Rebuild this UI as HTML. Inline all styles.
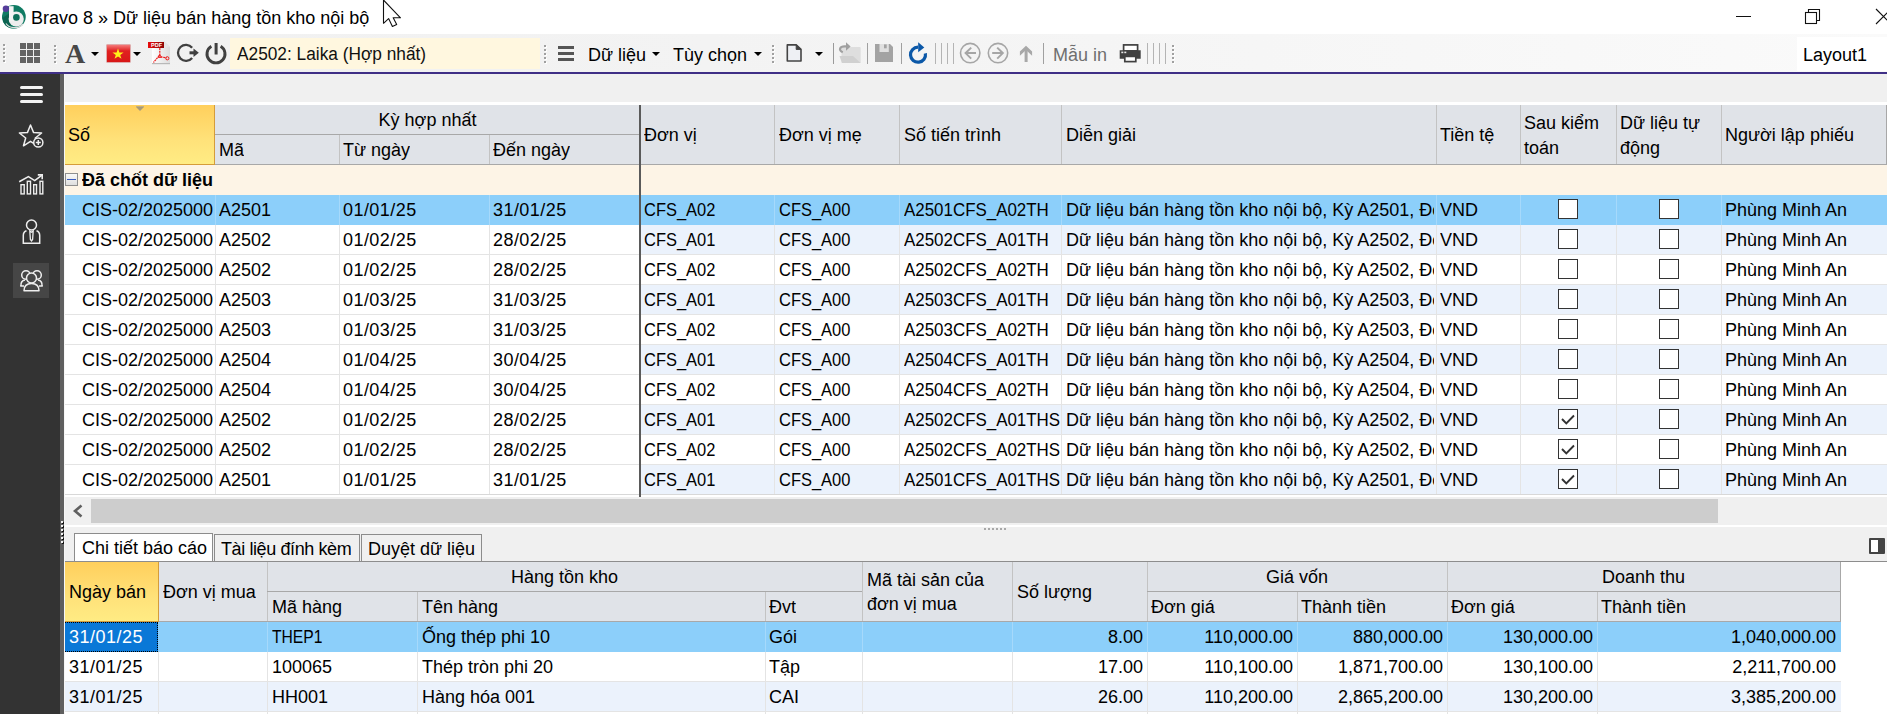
<!DOCTYPE html><html><head><meta charset="utf-8"><style>
*{box-sizing:border-box;margin:0;padding:0}
html,body{width:1887px;height:714px;overflow:hidden;background:#f0f0f0;font-family:"Liberation Sans",sans-serif;font-size:18px;color:#000}
.a{position:absolute}
.t{position:absolute;white-space:nowrap;line-height:30px;height:30px;overflow:hidden}
.cb{position:absolute;width:20px;height:20px;border:1px solid #333;background:#fff}
</style></head><body>
<div class="a" style="left:0px;top:0px;width:1887px;height:34px;background:#fff;"></div>
<div class="t" style="left:31px;top:3px;line-height:30px;height:30px;">Bravo 8 » Dữ liệu bán hàng tồn kho nội bộ</div>
<div class="a" style="left:0px;top:34px;width:1887px;height:38px;background:linear-gradient(90deg,#f0f0f0 0%,#f4f4f4 50%,#fafafa 100%);"></div>
<div class="a" style="left:0px;top:72px;width:1887px;height:2px;background:#3f2f86;"></div>
<div class="a" style="left:3px;top:44px;width:2px;height:2px;background:#a0a0a0;box-shadow:1px 1px 0 #fff"></div>
<div class="a" style="left:3px;top:48px;width:2px;height:2px;background:#a0a0a0;box-shadow:1px 1px 0 #fff"></div>
<div class="a" style="left:3px;top:52px;width:2px;height:2px;background:#a0a0a0;box-shadow:1px 1px 0 #fff"></div>
<div class="a" style="left:3px;top:56px;width:2px;height:2px;background:#a0a0a0;box-shadow:1px 1px 0 #fff"></div>
<div class="a" style="left:3px;top:60px;width:2px;height:2px;background:#a0a0a0;box-shadow:1px 1px 0 #fff"></div>
<div class="a" style="left:20.0px;top:43.0px;width:6px;height:6px;background:#636363;"></div>
<div class="a" style="left:27.2px;top:43.0px;width:6px;height:6px;background:#636363;"></div>
<div class="a" style="left:34.4px;top:43.0px;width:6px;height:6px;background:#636363;"></div>
<div class="a" style="left:20.0px;top:50.2px;width:6px;height:6px;background:#636363;"></div>
<div class="a" style="left:27.2px;top:50.2px;width:6px;height:6px;background:#636363;"></div>
<div class="a" style="left:34.4px;top:50.2px;width:6px;height:6px;background:#636363;"></div>
<div class="a" style="left:20.0px;top:57.4px;width:6px;height:6px;background:#636363;"></div>
<div class="a" style="left:27.2px;top:57.4px;width:6px;height:6px;background:#636363;"></div>
<div class="a" style="left:34.4px;top:57.4px;width:6px;height:6px;background:#636363;"></div>
<div class="a" style="left:54px;top:45px;width:2px;height:2px;background:#a0a0a0;box-shadow:1px 1px 0 #fff"></div>
<div class="a" style="left:54px;top:49px;width:2px;height:2px;background:#a0a0a0;box-shadow:1px 1px 0 #fff"></div>
<div class="a" style="left:54px;top:53px;width:2px;height:2px;background:#a0a0a0;box-shadow:1px 1px 0 #fff"></div>
<div class="a" style="left:54px;top:57px;width:2px;height:2px;background:#a0a0a0;box-shadow:1px 1px 0 #fff"></div>
<div class="a" style="left:54px;top:61px;width:2px;height:2px;background:#a0a0a0;box-shadow:1px 1px 0 #fff"></div>
<div class="a" style="left:65px;top:37px;font-family:'Liberation Serif',serif;font-weight:bold;font-size:28px;line-height:34px;color:#474747">A</div>
<div class="a" style="left:91px;top:52px;width:0;height:0;border-left:4.0px solid transparent;border-right:4.0px solid transparent;border-top:4px solid #000"></div>
<div class="a" style="left:107px;top:45px;width:23px;height:17px;background:linear-gradient(180deg,#f47a7a 0%,#e12020 35%,#d81818 100%);box-shadow:0 0 0 0.5px #c66"></div>
<svg class="a" style="left:111px;top:47px" width="14" height="13" viewBox="0 0 14 13"><polygon points="7,1.5 8.4,5.4 12.6,5.4 9.2,7.9 10.5,11.8 7,9.4 3.5,11.8 4.8,7.9 1.4,5.4 5.6,5.4" fill="#ffef1a"/></svg>
<div class="a" style="left:133px;top:52px;width:0;height:0;border-left:4.0px solid transparent;border-right:4.0px solid transparent;border-top:4px solid #000"></div>
<svg class="a" style="left:147px;top:40px" width="25" height="25" viewBox="0 0 25 25"><defs><linearGradient id="pg" x1="0" y1="0" x2="1" y2="0"><stop offset="0" stop-color="#ffffff"/><stop offset="1" stop-color="#dcdcdc"/></linearGradient><linearGradient id="bn" x1="0" y1="0" x2="1" y2="0"><stop offset="0" stop-color="#e80c0c"/><stop offset="1" stop-color="#8e0606"/></linearGradient></defs><path d="M5 1 H17 L23 7 V24 H5 Z" fill="url(#pg)"/><rect x="5" y="23" width="18" height="1.2" fill="#b8b8b8"/><path d="M17 1 L23 7 H17 Z" fill="#e6e6e6"/><rect x="1" y="2" width="16" height="6" fill="url(#bn)"/><text x="4" y="7" font-family="Liberation Sans" font-weight="bold" font-size="5.5" fill="#fff">PDF</text><path d="M12.8 8 V15.5 M12.3 15.5 L6.5 22.5 M13.5 16.8 L19.5 17.8" fill="none" stroke="#ee1c1c" stroke-width="1.2" stroke-dasharray="2 0.7"/><path d="M11.3 17.5 L12.8 14.8 L14.5 17.3 Z" fill="none" stroke="#ee1c1c" stroke-width="1"/><circle cx="20.3" cy="18.3" r="1.6" fill="none" stroke="#ee1c1c" stroke-width="1"/></svg>
<svg class="a" style="left:176px;top:42px" width="24" height="22" viewBox="0 0 24 22"><path d="M16.13 5.66 A8 8 0 1 0 16.13 15.94" fill="none" stroke="#404040" stroke-width="2.3"/><rect x="13.5" y="9.3" width="5.5" height="3" fill="#404040"/><path d="M17.5 6.6 L22.8 10.8 L17.5 15 Z" fill="#404040"/></svg>
<svg class="a" style="left:204px;top:40px" width="24" height="25" viewBox="0 0 24 25"><path d="M7.35 6.2 A9 9 0 1 0 16.65 6.2" fill="none" stroke="#404040" stroke-width="2.9"/><rect x="10.6" y="3" width="3" height="11.5" fill="#404040"/></svg>
<div class="a" style="left:230px;top:38px;width:310px;height:31px;background:#fff7df;"></div>
<div class="t" style="left:237px;top:39px;line-height:30px;height:30px;color:#111;transform:scaleX(0.96);transform-origin:0 0">A2502: Laika (Hợp nhất)</div>
<div class="a" style="left:544px;top:45px;width:2px;height:2px;background:#a0a0a0;box-shadow:1px 1px 0 #fff"></div>
<div class="a" style="left:544px;top:49px;width:2px;height:2px;background:#a0a0a0;box-shadow:1px 1px 0 #fff"></div>
<div class="a" style="left:544px;top:53px;width:2px;height:2px;background:#a0a0a0;box-shadow:1px 1px 0 #fff"></div>
<div class="a" style="left:544px;top:57px;width:2px;height:2px;background:#a0a0a0;box-shadow:1px 1px 0 #fff"></div>
<div class="a" style="left:544px;top:61px;width:2px;height:2px;background:#a0a0a0;box-shadow:1px 1px 0 #fff"></div>
<div class="a" style="left:558px;top:46px;width:16px;height:3px;background:#555;"></div>
<div class="a" style="left:558px;top:52px;width:16px;height:3px;background:#555;"></div>
<div class="a" style="left:558px;top:58px;width:16px;height:3px;background:#555;"></div>
<div class="t" style="left:588px;top:40px;line-height:30px;height:30px;">Dữ liệu</div>
<div class="a" style="left:652px;top:52px;width:0;height:0;border-left:4.0px solid transparent;border-right:4.0px solid transparent;border-top:4.5px solid #000"></div>
<div class="t" style="left:673px;top:40px;line-height:30px;height:30px;">Tùy chọn</div>
<div class="a" style="left:754px;top:52px;width:0;height:0;border-left:4.0px solid transparent;border-right:4.0px solid transparent;border-top:4.5px solid #000"></div>
<div class="a" style="left:772px;top:45px;width:2px;height:2px;background:#a0a0a0;box-shadow:1px 1px 0 #fff"></div>
<div class="a" style="left:772px;top:49px;width:2px;height:2px;background:#a0a0a0;box-shadow:1px 1px 0 #fff"></div>
<div class="a" style="left:772px;top:53px;width:2px;height:2px;background:#a0a0a0;box-shadow:1px 1px 0 #fff"></div>
<div class="a" style="left:772px;top:57px;width:2px;height:2px;background:#a0a0a0;box-shadow:1px 1px 0 #fff"></div>
<div class="a" style="left:772px;top:61px;width:2px;height:2px;background:#a0a0a0;box-shadow:1px 1px 0 #fff"></div>
<svg class="a" style="left:785px;top:43px" width="18" height="20" viewBox="0 0 18 20"><path d="M2.3 1.9 H11.2 L16 6.4 V18 H2.3 Z" fill="#eef0f4" stroke="#444" stroke-width="1.6" stroke-linejoin="round"/><path d="M11.2 1.9 L16 6.4 H11.2 Z" fill="#444" stroke="#444" stroke-width="1"/></svg>
<div class="a" style="left:815px;top:52px;width:0;height:0;border-left:4.0px solid transparent;border-right:4.0px solid transparent;border-top:4px solid #000"></div>
<div class="a" style="left:833px;top:43px;width:1px;height:21px;background:#9a9a9a;"></div>
<svg class="a" style="left:838px;top:41px" width="24" height="24" viewBox="0 0 24 24"><rect x="3.5" y="6" width="19.2" height="16" rx="1" fill="#dedede"/><path d="M1.5 15 H15 L22.7 22 H4 Z" fill="#d0d0d0"/><path d="M4.8 11.3 C0.3 9.5 1.2 4.6 8.3 5.4" fill="none" stroke="#a0a0a0" stroke-width="2.3"/><path d="M8 1.3 L12.6 5.5 L8 9.7 Z" fill="#a0a0a0"/></svg>
<div class="a" style="left:867px;top:43px;width:1px;height:21px;background:#a0a0a0;"></div>
<svg class="a" style="left:874px;top:43px" width="20" height="20" viewBox="0 0 20 20"><path d="M1 1 H16 L19 4 V19 H1 Z" fill="#a3a3a3"/><rect x="5.5" y="1" width="9.3" height="8" fill="#e0e0e0"/><rect x="10" y="1.4" width="2.7" height="3.9" fill="#a3a3a3"/></svg>
<div class="a" style="left:901px;top:43px;width:1px;height:21px;background:#a0a0a0;"></div>
<svg class="a" style="left:907px;top:41px" width="22" height="24" viewBox="0 0 22 24"><path d="M18.39 12.4 A7.5 7.5 0 1 1 11 6.2" fill="none" stroke="#0b58a8" stroke-width="3.2"/><path d="M11.2 1.2 L17.3 6.5 L11.2 11.3 Z" fill="#0b58a8"/></svg>
<div class="a" style="left:935px;top:43px;width:1px;height:21px;background:#b4b4b4;"></div>
<div class="a" style="left:941px;top:43px;width:1px;height:21px;background:#b4b4b4;"></div>
<div class="a" style="left:947px;top:43px;width:1px;height:21px;background:#b4b4b4;"></div>
<div class="a" style="left:953px;top:43px;width:1px;height:21px;background:#b4b4b4;"></div>
<svg class="a" style="left:959px;top:42px" width="23" height="23" viewBox="0 0 23 23"><circle cx="11.2" cy="11.1" r="9.7" fill="none" stroke="#a6a6a6" stroke-width="1.6"/><path d="M17 11.1 H6.8 M12.2 5.6 L6.6 11.1 L12.2 16.6" fill="none" stroke="#a6a6a6" stroke-width="2"/></svg>
<svg class="a" style="left:987px;top:42px" width="23" height="23" viewBox="0 0 23 23"><circle cx="11" cy="11.1" r="9.7" fill="none" stroke="#a6a6a6" stroke-width="1.6"/><path d="M5.2 11.1 H15.4 M10.2 5.6 L15.8 11.1 L10.2 16.6" fill="none" stroke="#a6a6a6" stroke-width="2"/></svg>
<svg class="a" style="left:1018px;top:45px" width="16" height="18" viewBox="0 0 16 18"><rect x="6.6" y="3" width="3" height="14" fill="#a8a8a8"/><path d="M8 0.7 L14.1 6.5 V10.8 L8 5 L1.9 10.8 V6.5 Z" fill="#a8a8a8"/></svg>
<div class="a" style="left:1043px;top:43px;width:1px;height:21px;background:#a0a0a0;"></div>
<div class="t" style="left:1053px;top:40px;line-height:30px;height:30px;color:#6f6f6f">Mẫu in</div>
<svg class="a" style="left:1118px;top:43px" width="24" height="20" viewBox="0 0 24 20"><rect x="5.6" y="1.9" width="14" height="6" fill="#fff" stroke="#404040" stroke-width="1.7"/><path d="M1.7 7.2 H22.7 V15.8 H17.8 V13.3 H6 V15.8 H1.7 Z" fill="#404040"/><rect x="6.8" y="13.4" width="11" height="5.2" fill="#fff" stroke="#404040" stroke-width="1.7"/><rect x="3.3" y="8.6" width="2" height="1.6" fill="#e8e8e8"/><rect x="6.3" y="8.6" width="2" height="1.6" fill="#e8e8e8"/></svg>
<div class="a" style="left:1147px;top:43px;width:1px;height:21px;background:#b4b4b4;"></div>
<div class="a" style="left:1153px;top:43px;width:1px;height:21px;background:#b4b4b4;"></div>
<div class="a" style="left:1159px;top:43px;width:1px;height:21px;background:#b4b4b4;"></div>
<div class="a" style="left:1165px;top:43px;width:1px;height:21px;background:#b4b4b4;"></div>
<div class="a" style="left:1172px;top:45px;width:2px;height:2px;background:#a0a0a0;box-shadow:1px 1px 0 #fff"></div>
<div class="a" style="left:1172px;top:49px;width:2px;height:2px;background:#a0a0a0;box-shadow:1px 1px 0 #fff"></div>
<div class="a" style="left:1172px;top:53px;width:2px;height:2px;background:#a0a0a0;box-shadow:1px 1px 0 #fff"></div>
<div class="a" style="left:1172px;top:57px;width:2px;height:2px;background:#a0a0a0;box-shadow:1px 1px 0 #fff"></div>
<div class="a" style="left:1172px;top:61px;width:2px;height:2px;background:#a0a0a0;box-shadow:1px 1px 0 #fff"></div>
<div class="a" style="left:1797px;top:37px;width:90px;height:34px;background:#ffffff;"></div>
<div class="t" style="left:1803px;top:40px;line-height:30px;height:30px;">Layout1</div>
<div class="a" style="left:1736px;top:16px;width:15px;height:1px;background:#111;"></div>
<svg class="a" style="left:1804px;top:8px" width="18" height="18" viewBox="0 0 18 18"><path d="M4.5 4.5 V1.5 H15.5 V12.5 H12.5" fill="none" stroke="#111" stroke-width="1.1"/><rect x="1.5" y="4.5" width="11" height="11" fill="none" stroke="#111" stroke-width="1.1"/></svg>
<svg class="a" style="left:1875px;top:8px" width="14" height="17" viewBox="0 0 14 17"><path d="M1 1 L16 16 M16 1 L1 16" stroke="#111" stroke-width="1.1"/></svg>
<svg class="a" style="left:382px;top:-1px" width="22" height="30" viewBox="0 0 22 30"><path d="M1.5 1 V24.3 L6.6 19.6 L10.4 27.4 L14.7 25.5 L11.2 18.8 L18.5 18.8 Z" fill="#fff" stroke="#111" stroke-width="1.1" stroke-linejoin="round"/></svg>
<svg class="a" style="left:2px;top:4px" width="26" height="26" viewBox="0 0 26 26"><circle cx="11.85" cy="12.8" r="11.9" fill="#0f7b63"/><path d="M0.5 14 A11.9 11.9 0 0 0 9 24.3 L9 8 Z" fill="#0b6350"/><circle cx="14.2" cy="15" r="7.6" fill="#eeeeee"/><rect x="7" y="2.2" width="4.6" height="15" fill="#f4f4f4"/><circle cx="14.4" cy="13.4" r="3.3" fill="#0d6f59"/><path d="M4 19.5 C7 24.5 16 25.5 21 20" fill="none" stroke="#dcdcdc" stroke-width="1.2"/><circle cx="3.9" cy="4.7" r="3.2" fill="#553c9a"/></svg>
<div class="a" style="left:0px;top:74px;width:60px;height:640px;background:#333333;"></div>
<div class="a" style="left:60px;top:74px;width:4px;height:640px;background:#5f5f5f;"></div>
<div class="a" style="left:20px;top:86.0px;width:23px;height:3px;background:#f4f4f4;border-radius:1.5px"></div>
<div class="a" style="left:20px;top:92.9px;width:23px;height:3px;background:#f4f4f4;border-radius:1.5px"></div>
<div class="a" style="left:20px;top:99.8px;width:23px;height:3px;background:#f4f4f4;border-radius:1.5px"></div>
<svg class="a" style="left:18px;top:123px" width="28" height="27" viewBox="0 0 28 27"><path d="M12.5 2 L15.6 9.6 L23.6 10 L17.3 15 L19.5 22.8 L12.5 18.3 L5.5 22.8 L7.7 15 L1.4 10 L9.4 9.6 Z" fill="none" stroke="#eeeeee" stroke-width="1.5" stroke-linejoin="round"/><circle cx="20.3" cy="19.5" r="4.6" fill="#333" stroke="#eeeeee" stroke-width="1.5"/><path d="M20.3 17 V22 M17.8 19.5 H22.8" stroke="#eeeeee" stroke-width="1.5"/></svg>
<svg class="a" style="left:18px;top:172px" width="27" height="23" viewBox="0 0 27 23"><path d="M1.2 9.8 L10.4 4.6 L16.7 8.6 L24 3.1" fill="none" stroke="#eeeeee" stroke-width="1.6"/><path d="M19.8 2.9 H24.2 V7.2" fill="none" stroke="#eeeeee" stroke-width="1.6"/><rect x="3" y="12.7" width="3.2" height="9.2" fill="none" stroke="#eeeeee" stroke-width="1.4"/><rect x="9.3" y="9.3" width="3.2" height="12.6" fill="none" stroke="#eeeeee" stroke-width="1.4"/><rect x="15.7" y="12.7" width="2.8" height="9.2" fill="none" stroke="#eeeeee" stroke-width="1.4"/><rect x="22" y="9.3" width="2.8" height="12.6" fill="none" stroke="#eeeeee" stroke-width="1.4"/></svg>
<svg class="a" style="left:21px;top:219px" width="21" height="26" viewBox="0 0 21 26"><circle cx="10.5" cy="6" r="5" fill="none" stroke="#eeeeee" stroke-width="1.5"/><path d="M5.5 11.8 C3.2 12.6 2.3 14 2.3 16.5 V24.3 H18.7 V16.5 C18.7 14 17.8 12.6 15.5 11.8" fill="none" stroke="#eeeeee" stroke-width="1.5"/><path d="M8.8 12 L10.5 13.3 L12.2 12 L11.6 20.5 L10.5 22 L9.4 20.5 Z" fill="none" stroke="#eeeeee" stroke-width="1.3"/></svg>
<div class="a" style="left:13px;top:263px;width:36px;height:35px;background:#464646;"></div>
<svg class="a" style="left:18px;top:268px" width="27" height="25" viewBox="0 0 27 25"><circle cx="8" cy="7" r="4.3" fill="none" stroke="#eeeeee" stroke-width="1.5"/><circle cx="19" cy="7" r="4.3" fill="none" stroke="#eeeeee" stroke-width="1.5"/><path d="M3 18 C2.5 14 4.5 12.5 7 12 M24 18 C24.5 14 22.5 12.5 20 12" fill="none" stroke="#eeeeee" stroke-width="1.5"/><path d="M2.2 18 H6" stroke="#eeeeee" stroke-width="1.5"/><path d="M21 18 H24.8" stroke="#eeeeee" stroke-width="1.5"/><circle cx="13.5" cy="10" r="5" fill="#464646" stroke="#eeeeee" stroke-width="1.5"/><path d="M6 22.8 C6 17 9 15.5 13.5 15.5 C18 15.5 21 17 21 22.8 Z" fill="#464646" stroke="#eeeeee" stroke-width="1.5" stroke-linejoin="round"/></svg>
<div class="a" style="left:64px;top:102px;width:1823px;height:3px;background:#ffffff;"></div>
<div class="a" style="left:64px;top:105px;width:1823px;height:60px;background:#e0e3e8;"></div>
<div class="a" style="left:64px;top:105px;width:151px;height:60px;background:linear-gradient(180deg,#ffcf5c 0%,#ffe27a 60%,#ffec84 100%);border-right:1px solid #d59c3a;border-bottom:1px solid #d59c3a"></div>
<div class="t" style="left:68px;top:120px;line-height:30px;height:30px;">Số</div>
<div class="a" style="left:136px;top:107px;width:0;height:0;border-left:4px solid transparent;border-right:4px solid transparent;border-top:4px solid #a89a78"></div>
<div class="a" style="left:136px;top:106px;width:8px;height:1px;background:#c0ae80;"></div>
<div class="a" style="left:215px;top:134px;width:425px;height:1px;background:#a8a8a8;"></div>
<div class="t" style="left:215px;top:105px;line-height:30px;height:30px;width:425px;text-align:center;">Kỳ hợp nhất</div>
<div class="t" style="left:219px;top:135px;line-height:30px;height:30px;">Mã</div>
<div class="a" style="left:339px;top:135px;width:1px;height:30px;background:#c3c3c3;"></div>
<div class="t" style="left:343px;top:135px;line-height:30px;height:30px;">Từ ngày</div>
<div class="a" style="left:489px;top:135px;width:1px;height:30px;background:#c3c3c3;"></div>
<div class="t" style="left:493px;top:135px;line-height:30px;height:30px;">Đến ngày</div>
<div class="a" style="left:640px;top:105px;width:1px;height:60px;background:#c3c3c3;"></div>
<div class="t" style="left:644px;top:120px;line-height:30px;height:30px;">Đơn vị</div>
<div class="a" style="left:774px;top:105px;width:1px;height:60px;background:#c3c3c3;"></div>
<div class="t" style="left:779px;top:120px;line-height:30px;height:30px;">Đơn vị mẹ</div>
<div class="a" style="left:899px;top:105px;width:1px;height:60px;background:#c3c3c3;"></div>
<div class="t" style="left:904px;top:120px;line-height:30px;height:30px;">Số tiến trình</div>
<div class="a" style="left:1061px;top:105px;width:1px;height:60px;background:#c3c3c3;"></div>
<div class="t" style="left:1066px;top:120px;line-height:30px;height:30px;">Diễn giải</div>
<div class="a" style="left:1436px;top:105px;width:1px;height:60px;background:#c3c3c3;"></div>
<div class="t" style="left:1440px;top:120px;line-height:30px;height:30px;">Tiền tệ</div>
<div class="a" style="left:1520px;top:105px;width:1px;height:60px;background:#c3c3c3;"></div>
<div class="a" style="left:1524px;top:111px;line-height:24.5px;white-space:nowrap">Sau kiểm<br>toán</div>
<div class="a" style="left:1616px;top:105px;width:1px;height:60px;background:#c3c3c3;"></div>
<div class="a" style="left:1620px;top:111px;line-height:24.5px;white-space:nowrap">Dữ liệu tự<br>động</div>
<div class="a" style="left:1721px;top:105px;width:1px;height:60px;background:#c3c3c3;"></div>
<div class="t" style="left:1725px;top:120px;line-height:30px;height:30px;">Người lập phiếu</div>
<div class="a" style="left:64px;top:164px;width:1823px;height:1px;background:#a8a8a8;"></div>
<div class="a" style="left:64px;top:164px;width:151px;height:1px;background:#d59c3a;"></div>
<div class="a" style="left:1886px;top:105px;width:1px;height:60px;background:#a8a8a8;"></div>
<div class="a" style="left:64px;top:165px;width:1823px;height:30px;background:#fdf4e6;"></div>
<div class="a" style="left:65px;top:173px;width:13px;height:13px;background:linear-gradient(180deg,#fafafa,#dedede);border:1px solid #8f8f8f"></div>
<div class="a" style="left:67px;top:179px;width:9px;height:1px;background:#3a5cc0;"></div>
<div class="t" style="left:82px;top:165px;line-height:30px;height:30px;"><b>Đã chốt dữ liệu</b></div>
<div class="a" style="left:64px;top:195px;width:1823px;height:30px;background:#8ccffa;"></div>
<div class="a" style="left:64px;top:224px;width:1823px;height:1px;background:#8ccffa;"></div>
<div class="t" style="left:82px;top:195px;width:133.0px;">CIS-02/2025000</div>
<div class="t" style="left:219px;top:195px;width:120.0px;">A2501</div>
<div class="t" style="left:343px;top:195px;width:146.0px;letter-spacing:0.45px">01/01/25</div>
<div class="t" style="left:493px;top:195px;width:146.0px;letter-spacing:0.45px">31/01/25</div>
<div class="t" style="left:644px;top:195px;width:142.1px;transform:scaleX(0.915);transform-origin:0 0;">CFS_A02</div>
<div class="t" style="left:779px;top:195px;width:131.1px;transform:scaleX(0.915);transform-origin:0 0;">CFS_A00</div>
<div class="t" style="left:904px;top:195px;width:167.0px;transform:scaleX(0.94);transform-origin:0 0;">A2501CFS_A02TH</div>
<div class="t" style="left:1066px;top:195px;width:368.0px;">Dữ liệu bán hàng tồn kho nội bộ, Kỳ A2501, Đơn vị</div>
<div class="t" style="left:1440px;top:195px;width:80.0px;">VND</div>
<div class="t" style="left:1725px;top:195px;width:162.0px;">Phùng Minh An</div>
<div class="cb" style="left:1558px;top:199px"></div>
<div class="cb" style="left:1659px;top:199px"></div>
<div class="a" style="left:64px;top:225px;width:576px;height:30px;background:#ffffff;"></div>
<div class="a" style="left:641px;top:225px;width:1246px;height:30px;background:#ebf2fc;"></div>
<div class="a" style="left:64px;top:254px;width:1823px;height:1px;background:#e4e4e4;"></div>
<div class="t" style="left:82px;top:225px;width:133.0px;">CIS-02/2025000</div>
<div class="t" style="left:219px;top:225px;width:120.0px;">A2502</div>
<div class="t" style="left:343px;top:225px;width:146.0px;letter-spacing:0.45px">01/02/25</div>
<div class="t" style="left:493px;top:225px;width:146.0px;letter-spacing:0.45px">28/02/25</div>
<div class="t" style="left:644px;top:225px;width:142.1px;transform:scaleX(0.915);transform-origin:0 0;">CFS_A01</div>
<div class="t" style="left:779px;top:225px;width:131.1px;transform:scaleX(0.915);transform-origin:0 0;">CFS_A00</div>
<div class="t" style="left:904px;top:225px;width:167.0px;transform:scaleX(0.94);transform-origin:0 0;">A2502CFS_A01TH</div>
<div class="t" style="left:1066px;top:225px;width:368.0px;">Dữ liệu bán hàng tồn kho nội bộ, Kỳ A2502, Đơn vị</div>
<div class="t" style="left:1440px;top:225px;width:80.0px;">VND</div>
<div class="t" style="left:1725px;top:225px;width:162.0px;">Phùng Minh An</div>
<div class="cb" style="left:1558px;top:229px"></div>
<div class="cb" style="left:1659px;top:229px"></div>
<div class="a" style="left:64px;top:255px;width:576px;height:30px;background:#ffffff;"></div>
<div class="a" style="left:641px;top:255px;width:1246px;height:30px;background:#ffffff;"></div>
<div class="a" style="left:64px;top:284px;width:1823px;height:1px;background:#e4e4e4;"></div>
<div class="t" style="left:82px;top:255px;width:133.0px;">CIS-02/2025000</div>
<div class="t" style="left:219px;top:255px;width:120.0px;">A2502</div>
<div class="t" style="left:343px;top:255px;width:146.0px;letter-spacing:0.45px">01/02/25</div>
<div class="t" style="left:493px;top:255px;width:146.0px;letter-spacing:0.45px">28/02/25</div>
<div class="t" style="left:644px;top:255px;width:142.1px;transform:scaleX(0.915);transform-origin:0 0;">CFS_A02</div>
<div class="t" style="left:779px;top:255px;width:131.1px;transform:scaleX(0.915);transform-origin:0 0;">CFS_A00</div>
<div class="t" style="left:904px;top:255px;width:167.0px;transform:scaleX(0.94);transform-origin:0 0;">A2502CFS_A02TH</div>
<div class="t" style="left:1066px;top:255px;width:368.0px;">Dữ liệu bán hàng tồn kho nội bộ, Kỳ A2502, Đơn vị</div>
<div class="t" style="left:1440px;top:255px;width:80.0px;">VND</div>
<div class="t" style="left:1725px;top:255px;width:162.0px;">Phùng Minh An</div>
<div class="cb" style="left:1558px;top:259px"></div>
<div class="cb" style="left:1659px;top:259px"></div>
<div class="a" style="left:64px;top:285px;width:576px;height:30px;background:#ffffff;"></div>
<div class="a" style="left:641px;top:285px;width:1246px;height:30px;background:#ebf2fc;"></div>
<div class="a" style="left:64px;top:314px;width:1823px;height:1px;background:#e4e4e4;"></div>
<div class="t" style="left:82px;top:285px;width:133.0px;">CIS-02/2025000</div>
<div class="t" style="left:219px;top:285px;width:120.0px;">A2503</div>
<div class="t" style="left:343px;top:285px;width:146.0px;letter-spacing:0.45px">01/03/25</div>
<div class="t" style="left:493px;top:285px;width:146.0px;letter-spacing:0.45px">31/03/25</div>
<div class="t" style="left:644px;top:285px;width:142.1px;transform:scaleX(0.915);transform-origin:0 0;">CFS_A01</div>
<div class="t" style="left:779px;top:285px;width:131.1px;transform:scaleX(0.915);transform-origin:0 0;">CFS_A00</div>
<div class="t" style="left:904px;top:285px;width:167.0px;transform:scaleX(0.94);transform-origin:0 0;">A2503CFS_A01TH</div>
<div class="t" style="left:1066px;top:285px;width:368.0px;">Dữ liệu bán hàng tồn kho nội bộ, Kỳ A2503, Đơn vị</div>
<div class="t" style="left:1440px;top:285px;width:80.0px;">VND</div>
<div class="t" style="left:1725px;top:285px;width:162.0px;">Phùng Minh An</div>
<div class="cb" style="left:1558px;top:289px"></div>
<div class="cb" style="left:1659px;top:289px"></div>
<div class="a" style="left:64px;top:315px;width:576px;height:30px;background:#ffffff;"></div>
<div class="a" style="left:641px;top:315px;width:1246px;height:30px;background:#ffffff;"></div>
<div class="a" style="left:64px;top:344px;width:1823px;height:1px;background:#e4e4e4;"></div>
<div class="t" style="left:82px;top:315px;width:133.0px;">CIS-02/2025000</div>
<div class="t" style="left:219px;top:315px;width:120.0px;">A2503</div>
<div class="t" style="left:343px;top:315px;width:146.0px;letter-spacing:0.45px">01/03/25</div>
<div class="t" style="left:493px;top:315px;width:146.0px;letter-spacing:0.45px">31/03/25</div>
<div class="t" style="left:644px;top:315px;width:142.1px;transform:scaleX(0.915);transform-origin:0 0;">CFS_A02</div>
<div class="t" style="left:779px;top:315px;width:131.1px;transform:scaleX(0.915);transform-origin:0 0;">CFS_A00</div>
<div class="t" style="left:904px;top:315px;width:167.0px;transform:scaleX(0.94);transform-origin:0 0;">A2503CFS_A02TH</div>
<div class="t" style="left:1066px;top:315px;width:368.0px;">Dữ liệu bán hàng tồn kho nội bộ, Kỳ A2503, Đơn vị</div>
<div class="t" style="left:1440px;top:315px;width:80.0px;">VND</div>
<div class="t" style="left:1725px;top:315px;width:162.0px;">Phùng Minh An</div>
<div class="cb" style="left:1558px;top:319px"></div>
<div class="cb" style="left:1659px;top:319px"></div>
<div class="a" style="left:64px;top:345px;width:576px;height:30px;background:#ffffff;"></div>
<div class="a" style="left:641px;top:345px;width:1246px;height:30px;background:#ebf2fc;"></div>
<div class="a" style="left:64px;top:374px;width:1823px;height:1px;background:#e4e4e4;"></div>
<div class="t" style="left:82px;top:345px;width:133.0px;">CIS-02/2025000</div>
<div class="t" style="left:219px;top:345px;width:120.0px;">A2504</div>
<div class="t" style="left:343px;top:345px;width:146.0px;letter-spacing:0.45px">01/04/25</div>
<div class="t" style="left:493px;top:345px;width:146.0px;letter-spacing:0.45px">30/04/25</div>
<div class="t" style="left:644px;top:345px;width:142.1px;transform:scaleX(0.915);transform-origin:0 0;">CFS_A01</div>
<div class="t" style="left:779px;top:345px;width:131.1px;transform:scaleX(0.915);transform-origin:0 0;">CFS_A00</div>
<div class="t" style="left:904px;top:345px;width:167.0px;transform:scaleX(0.94);transform-origin:0 0;">A2504CFS_A01TH</div>
<div class="t" style="left:1066px;top:345px;width:368.0px;">Dữ liệu bán hàng tồn kho nội bộ, Kỳ A2504, Đơn vị</div>
<div class="t" style="left:1440px;top:345px;width:80.0px;">VND</div>
<div class="t" style="left:1725px;top:345px;width:162.0px;">Phùng Minh An</div>
<div class="cb" style="left:1558px;top:349px"></div>
<div class="cb" style="left:1659px;top:349px"></div>
<div class="a" style="left:64px;top:375px;width:576px;height:30px;background:#ffffff;"></div>
<div class="a" style="left:641px;top:375px;width:1246px;height:30px;background:#ffffff;"></div>
<div class="a" style="left:64px;top:404px;width:1823px;height:1px;background:#e4e4e4;"></div>
<div class="t" style="left:82px;top:375px;width:133.0px;">CIS-02/2025000</div>
<div class="t" style="left:219px;top:375px;width:120.0px;">A2504</div>
<div class="t" style="left:343px;top:375px;width:146.0px;letter-spacing:0.45px">01/04/25</div>
<div class="t" style="left:493px;top:375px;width:146.0px;letter-spacing:0.45px">30/04/25</div>
<div class="t" style="left:644px;top:375px;width:142.1px;transform:scaleX(0.915);transform-origin:0 0;">CFS_A02</div>
<div class="t" style="left:779px;top:375px;width:131.1px;transform:scaleX(0.915);transform-origin:0 0;">CFS_A00</div>
<div class="t" style="left:904px;top:375px;width:167.0px;transform:scaleX(0.94);transform-origin:0 0;">A2504CFS_A02TH</div>
<div class="t" style="left:1066px;top:375px;width:368.0px;">Dữ liệu bán hàng tồn kho nội bộ, Kỳ A2504, Đơn vị</div>
<div class="t" style="left:1440px;top:375px;width:80.0px;">VND</div>
<div class="t" style="left:1725px;top:375px;width:162.0px;">Phùng Minh An</div>
<div class="cb" style="left:1558px;top:379px"></div>
<div class="cb" style="left:1659px;top:379px"></div>
<div class="a" style="left:64px;top:405px;width:576px;height:30px;background:#ffffff;"></div>
<div class="a" style="left:641px;top:405px;width:1246px;height:30px;background:#ebf2fc;"></div>
<div class="a" style="left:64px;top:434px;width:1823px;height:1px;background:#e4e4e4;"></div>
<div class="t" style="left:82px;top:405px;width:133.0px;">CIS-02/2025000</div>
<div class="t" style="left:219px;top:405px;width:120.0px;">A2502</div>
<div class="t" style="left:343px;top:405px;width:146.0px;letter-spacing:0.45px">01/02/25</div>
<div class="t" style="left:493px;top:405px;width:146.0px;letter-spacing:0.45px">28/02/25</div>
<div class="t" style="left:644px;top:405px;width:142.1px;transform:scaleX(0.915);transform-origin:0 0;">CFS_A01</div>
<div class="t" style="left:779px;top:405px;width:131.1px;transform:scaleX(0.915);transform-origin:0 0;">CFS_A00</div>
<div class="t" style="left:904px;top:405px;width:167.0px;transform:scaleX(0.94);transform-origin:0 0;">A2502CFS_A01THS</div>
<div class="t" style="left:1066px;top:405px;width:368.0px;">Dữ liệu bán hàng tồn kho nội bộ, Kỳ A2502, Đơn vị</div>
<div class="t" style="left:1440px;top:405px;width:80.0px;">VND</div>
<div class="t" style="left:1725px;top:405px;width:162.0px;">Phùng Minh An</div>
<div class="cb" style="left:1558px;top:409px"></div>
<svg class="a" style="left:1558px;top:409px" width="20" height="20"><path d="M4 10 L8.3 14.5 L16 6.5" stroke="#333" stroke-width="1.9" fill="none"/></svg>
<div class="cb" style="left:1659px;top:409px"></div>
<div class="a" style="left:64px;top:435px;width:576px;height:30px;background:#ffffff;"></div>
<div class="a" style="left:641px;top:435px;width:1246px;height:30px;background:#ffffff;"></div>
<div class="a" style="left:64px;top:464px;width:1823px;height:1px;background:#e4e4e4;"></div>
<div class="t" style="left:82px;top:435px;width:133.0px;">CIS-02/2025000</div>
<div class="t" style="left:219px;top:435px;width:120.0px;">A2502</div>
<div class="t" style="left:343px;top:435px;width:146.0px;letter-spacing:0.45px">01/02/25</div>
<div class="t" style="left:493px;top:435px;width:146.0px;letter-spacing:0.45px">28/02/25</div>
<div class="t" style="left:644px;top:435px;width:142.1px;transform:scaleX(0.915);transform-origin:0 0;">CFS_A02</div>
<div class="t" style="left:779px;top:435px;width:131.1px;transform:scaleX(0.915);transform-origin:0 0;">CFS_A00</div>
<div class="t" style="left:904px;top:435px;width:167.0px;transform:scaleX(0.94);transform-origin:0 0;">A2502CFS_A02THS</div>
<div class="t" style="left:1066px;top:435px;width:368.0px;">Dữ liệu bán hàng tồn kho nội bộ, Kỳ A2502, Đơn vị</div>
<div class="t" style="left:1440px;top:435px;width:80.0px;">VND</div>
<div class="t" style="left:1725px;top:435px;width:162.0px;">Phùng Minh An</div>
<div class="cb" style="left:1558px;top:439px"></div>
<svg class="a" style="left:1558px;top:439px" width="20" height="20"><path d="M4 10 L8.3 14.5 L16 6.5" stroke="#333" stroke-width="1.9" fill="none"/></svg>
<div class="cb" style="left:1659px;top:439px"></div>
<div class="a" style="left:64px;top:465px;width:576px;height:30px;background:#ffffff;"></div>
<div class="a" style="left:641px;top:465px;width:1246px;height:30px;background:#ebf2fc;"></div>
<div class="a" style="left:64px;top:494px;width:1823px;height:1px;background:#e4e4e4;"></div>
<div class="t" style="left:82px;top:465px;width:133.0px;">CIS-02/2025000</div>
<div class="t" style="left:219px;top:465px;width:120.0px;">A2501</div>
<div class="t" style="left:343px;top:465px;width:146.0px;letter-spacing:0.45px">01/01/25</div>
<div class="t" style="left:493px;top:465px;width:146.0px;letter-spacing:0.45px">31/01/25</div>
<div class="t" style="left:644px;top:465px;width:142.1px;transform:scaleX(0.915);transform-origin:0 0;">CFS_A01</div>
<div class="t" style="left:779px;top:465px;width:131.1px;transform:scaleX(0.915);transform-origin:0 0;">CFS_A00</div>
<div class="t" style="left:904px;top:465px;width:167.0px;transform:scaleX(0.94);transform-origin:0 0;">A2501CFS_A01THS</div>
<div class="t" style="left:1066px;top:465px;width:368.0px;">Dữ liệu bán hàng tồn kho nội bộ, Kỳ A2501, Đơn vị</div>
<div class="t" style="left:1440px;top:465px;width:80.0px;">VND</div>
<div class="t" style="left:1725px;top:465px;width:162.0px;">Phùng Minh An</div>
<div class="cb" style="left:1558px;top:469px"></div>
<svg class="a" style="left:1558px;top:469px" width="20" height="20"><path d="M4 10 L8.3 14.5 L16 6.5" stroke="#333" stroke-width="1.9" fill="none"/></svg>
<div class="cb" style="left:1659px;top:469px"></div>
<div class="a" style="left:215px;top:225px;width:1px;height:270px;background:#e4e4e4;"></div>
<div class="a" style="left:215px;top:195px;width:1px;height:30px;background:#a6d9fb;"></div>
<div class="a" style="left:339px;top:225px;width:1px;height:270px;background:#e4e4e4;"></div>
<div class="a" style="left:339px;top:195px;width:1px;height:30px;background:#a6d9fb;"></div>
<div class="a" style="left:489px;top:225px;width:1px;height:270px;background:#e4e4e4;"></div>
<div class="a" style="left:489px;top:195px;width:1px;height:30px;background:#a6d9fb;"></div>
<div class="a" style="left:774px;top:225px;width:1px;height:270px;background:#e4e4e4;"></div>
<div class="a" style="left:774px;top:195px;width:1px;height:30px;background:#a6d9fb;"></div>
<div class="a" style="left:899px;top:225px;width:1px;height:270px;background:#e4e4e4;"></div>
<div class="a" style="left:899px;top:195px;width:1px;height:30px;background:#a6d9fb;"></div>
<div class="a" style="left:1061px;top:225px;width:1px;height:270px;background:#e4e4e4;"></div>
<div class="a" style="left:1061px;top:195px;width:1px;height:30px;background:#a6d9fb;"></div>
<div class="a" style="left:1436px;top:225px;width:1px;height:270px;background:#e4e4e4;"></div>
<div class="a" style="left:1436px;top:195px;width:1px;height:30px;background:#a6d9fb;"></div>
<div class="a" style="left:1520px;top:225px;width:1px;height:270px;background:#e4e4e4;"></div>
<div class="a" style="left:1520px;top:195px;width:1px;height:30px;background:#a6d9fb;"></div>
<div class="a" style="left:1616px;top:225px;width:1px;height:270px;background:#e4e4e4;"></div>
<div class="a" style="left:1616px;top:195px;width:1px;height:30px;background:#a6d9fb;"></div>
<div class="a" style="left:1721px;top:225px;width:1px;height:270px;background:#e4e4e4;"></div>
<div class="a" style="left:1721px;top:195px;width:1px;height:30px;background:#a6d9fb;"></div>
<div class="a" style="left:639px;top:105px;width:2px;height:392px;background:#5a5a5a;"></div>
<div class="a" style="left:64px;top:495px;width:1823px;height:2px;background:#ffffff;"></div>
<div class="a" style="left:639px;top:494px;width:2px;height:3px;background:#5a5a5a;"></div>
<div class="a" style="left:64px;top:497px;width:1823px;height:28px;background:#f0f0f0;"></div>
<div class="a" style="left:64px;top:494px;width:1823px;height:3px;background:#ffffff;"></div>
<div class="a" style="left:64px;top:494px;width:1823px;height:1px;background:#d8d8d8;"></div>
<div class="a" style="left:639px;top:494px;width:2px;height:3px;background:#5a5a5a;"></div>
<svg class="a" style="left:71px;top:504px" width="14" height="14" viewBox="0 0 14 14"><path d="M10.5 1.5 L4 7 L10.5 12.5" fill="none" stroke="#606060" stroke-width="2.6"/></svg>
<div class="a" style="left:91px;top:499px;width:1627px;height:24px;background:#cdcdcd;"></div>
<div class="a" style="left:984px;top:528px;width:2px;height:2px;background:#a8a8a8;"></div>
<div class="a" style="left:988px;top:528px;width:2px;height:2px;background:#a8a8a8;"></div>
<div class="a" style="left:992px;top:528px;width:2px;height:2px;background:#a8a8a8;"></div>
<div class="a" style="left:996px;top:528px;width:2px;height:2px;background:#a8a8a8;"></div>
<div class="a" style="left:1000px;top:528px;width:2px;height:2px;background:#a8a8a8;"></div>
<div class="a" style="left:1004px;top:528px;width:2px;height:2px;background:#a8a8a8;"></div>
<div class="a" style="left:64px;top:525px;width:1823px;height:2px;background:#ffffff;"></div>
<div class="a" style="left:61px;top:521px;width:2px;height:2px;background:#f4f4f4;box-shadow:1px 1px 0 #111"></div>
<div class="a" style="left:61px;top:525px;width:2px;height:2px;background:#f4f4f4;box-shadow:1px 1px 0 #111"></div>
<div class="a" style="left:61px;top:529px;width:2px;height:2px;background:#f4f4f4;box-shadow:1px 1px 0 #111"></div>
<div class="a" style="left:61px;top:533px;width:2px;height:2px;background:#f4f4f4;box-shadow:1px 1px 0 #111"></div>
<div class="a" style="left:61px;top:537px;width:2px;height:2px;background:#f4f4f4;box-shadow:1px 1px 0 #111"></div>
<div class="a" style="left:61px;top:541px;width:2px;height:2px;background:#f4f4f4;box-shadow:1px 1px 0 #111"></div>
<div class="a" style="left:74px;top:533px;width:139px;height:30px;background:#fff;border:1px solid #8c8c8c;border-bottom:none"></div>
<div class="t" style="left:82px;top:533px;line-height:30px;height:30px;">Chi tiết báo cáo</div>
<div class="a" style="left:214px;top:534px;width:146px;height:28px;background:#f0f0f0;border:1px solid #8c8c8c;border-bottom:none"></div>
<div class="t" style="left:221px;top:534px;line-height:30px;height:30px;letter-spacing:-0.4px">Tài liệu đính kèm</div>
<div class="a" style="left:361px;top:534px;width:121px;height:28px;background:#f0f0f0;border:1px solid #8c8c8c;border-bottom:none"></div>
<div class="t" style="left:368px;top:534px;line-height:30px;height:30px;">Duyệt dữ liệu</div>
<div class="a" style="left:64px;top:561px;width:10px;height:1px;background:#8d8d8d;"></div>
<div class="a" style="left:1869px;top:538px;width:16px;height:16px;border:2px solid #444;border-radius:1px;background:linear-gradient(90deg,#fff 0 7px,#444 7px 100%)"></div>
<div class="a" style="left:64px;top:561px;width:1823px;height:1px;background:#8d8d8d;"></div>
<div class="a" style="left:1840px;top:562px;width:47px;height:152px;background:#ffffff;"></div>
<div class="a" style="left:64px;top:562px;width:1777px;height:60px;background:#e0e3e8;"></div>
<div class="a" style="left:64px;top:562px;width:95px;height:60px;background:linear-gradient(180deg,#ffcf5c 0%,#ffe27a 60%,#ffec84 100%);border-right:1px solid #d59c3a"></div>
<div class="t" style="left:69px;top:577px;line-height:30px;height:30px;">Ngày bán</div>
<div class="a" style="left:267px;top:562px;width:1px;height:60px;background:#c3c3c3;"></div>
<div class="t" style="left:163px;top:577px;line-height:30px;height:30px;">Đơn vị mua</div>
<div class="a" style="left:267px;top:591px;width:595px;height:1px;background:#a8a8a8;"></div>
<div class="t" style="left:267px;top:562px;line-height:30px;height:30px;width:595px;text-align:center;">Hàng tồn kho</div>
<div class="a" style="left:417px;top:592px;width:1px;height:30px;background:#c3c3c3;"></div>
<div class="a" style="left:765px;top:592px;width:1px;height:30px;background:#c3c3c3;"></div>
<div class="t" style="left:272px;top:592px;line-height:30px;height:30px;">Mã hàng</div>
<div class="t" style="left:422px;top:592px;line-height:30px;height:30px;">Tên hàng</div>
<div class="t" style="left:769px;top:592px;line-height:30px;height:30px;">Đvt</div>
<div class="a" style="left:862px;top:562px;width:1px;height:60px;background:#c3c3c3;"></div>
<div class="a" style="left:867px;top:568px;line-height:24px;white-space:nowrap">Mã tài sản của<br>đơn vị mua</div>
<div class="a" style="left:1012px;top:562px;width:1px;height:60px;background:#c3c3c3;"></div>
<div class="t" style="left:1017px;top:577px;line-height:30px;height:30px;">Số lượng</div>
<div class="a" style="left:1147px;top:562px;width:1px;height:60px;background:#c3c3c3;"></div>
<div class="a" style="left:1147px;top:591px;width:693px;height:1px;background:#a8a8a8;"></div>
<div class="t" style="left:1147px;top:562px;line-height:30px;height:30px;width:300px;text-align:center;">Giá vốn</div>
<div class="a" style="left:1297px;top:592px;width:1px;height:30px;background:#c3c3c3;"></div>
<div class="a" style="left:1447px;top:562px;width:1px;height:60px;background:#c3c3c3;"></div>
<div class="a" style="left:1597px;top:592px;width:1px;height:30px;background:#c3c3c3;"></div>
<div class="t" style="left:1447px;top:562px;line-height:30px;height:30px;width:393px;text-align:center;">Doanh thu</div>
<div class="t" style="left:1151px;top:592px;line-height:30px;height:30px;">Đơn giá</div>
<div class="t" style="left:1301px;top:592px;line-height:30px;height:30px;">Thành tiền</div>
<div class="t" style="left:1451px;top:592px;line-height:30px;height:30px;">Đơn giá</div>
<div class="t" style="left:1601px;top:592px;line-height:30px;height:30px;">Thành tiền</div>
<div class="a" style="left:1840px;top:562px;width:1px;height:60px;background:#a8a8a8;"></div>
<div class="a" style="left:64px;top:621px;width:1777px;height:1px;background:#a8a8a8;"></div>
<div class="a" style="left:64px;top:621px;width:95px;height:1px;background:#d59c3a;"></div>
<div class="a" style="left:64px;top:622px;width:1777px;height:30px;background:#8ccffa;"></div>
<div class="a" style="left:64px;top:651px;width:1777px;height:1px;background:#8ccffa;"></div>
<div class="a" style="left:64px;top:622px;width:94px;height:30px;background:#0a78d7;border:1px dotted #000"></div>
<div class="t" style="left:69px;top:622px;line-height:30px;height:30px;color:#fff;letter-spacing:0.5px">31/01/25</div>
<div class="t" style="left:272px;top:622px;line-height:30px;height:30px;transform:scaleX(0.87);transform-origin:0 0">THEP1</div>
<div class="t" style="left:422px;top:622px;line-height:30px;height:30px;">Ống thép phi 10</div>
<div class="t" style="left:769px;top:622px;line-height:30px;height:30px;">Gói</div>
<div class="t" style="left:1012px;top:622px;line-height:30px;height:30px;width:131px;text-align:right;">8.00</div>
<div class="t" style="left:1147px;top:622px;line-height:30px;height:30px;width:146px;text-align:right;">110,000.00</div>
<div class="t" style="left:1297px;top:622px;line-height:30px;height:30px;width:146px;text-align:right;">880,000.00</div>
<div class="t" style="left:1447px;top:622px;line-height:30px;height:30px;width:146px;text-align:right;">130,000.00</div>
<div class="t" style="left:1597px;top:622px;line-height:30px;height:30px;width:239px;text-align:right;">1,040,000.00</div>
<div class="a" style="left:64px;top:652px;width:1777px;height:30px;background:#ffffff;"></div>
<div class="a" style="left:64px;top:681px;width:1777px;height:1px;background:#e4e4e4;"></div>
<div class="t" style="left:69px;top:652px;line-height:30px;height:30px;letter-spacing:0.5px">31/01/25</div>
<div class="t" style="left:272px;top:652px;line-height:30px;height:30px;">100065</div>
<div class="t" style="left:422px;top:652px;line-height:30px;height:30px;">Thép tròn phi 20</div>
<div class="t" style="left:769px;top:652px;line-height:30px;height:30px;">Tập</div>
<div class="t" style="left:1012px;top:652px;line-height:30px;height:30px;width:131px;text-align:right;">17.00</div>
<div class="t" style="left:1147px;top:652px;line-height:30px;height:30px;width:146px;text-align:right;">110,100.00</div>
<div class="t" style="left:1297px;top:652px;line-height:30px;height:30px;width:146px;text-align:right;">1,871,700.00</div>
<div class="t" style="left:1447px;top:652px;line-height:30px;height:30px;width:146px;text-align:right;">130,100.00</div>
<div class="t" style="left:1597px;top:652px;line-height:30px;height:30px;width:239px;text-align:right;">2,211,700.00</div>
<div class="a" style="left:64px;top:682px;width:1777px;height:30px;background:#ebf2fc;"></div>
<div class="a" style="left:64px;top:711px;width:1777px;height:1px;background:#e4e4e4;"></div>
<div class="t" style="left:69px;top:682px;line-height:30px;height:30px;letter-spacing:0.5px">31/01/25</div>
<div class="t" style="left:272px;top:682px;line-height:30px;height:30px;">HH001</div>
<div class="t" style="left:422px;top:682px;line-height:30px;height:30px;">Hàng hóa 001</div>
<div class="t" style="left:769px;top:682px;line-height:30px;height:30px;">CAI</div>
<div class="t" style="left:1012px;top:682px;line-height:30px;height:30px;width:131px;text-align:right;">26.00</div>
<div class="t" style="left:1147px;top:682px;line-height:30px;height:30px;width:146px;text-align:right;">110,200.00</div>
<div class="t" style="left:1297px;top:682px;line-height:30px;height:30px;width:146px;text-align:right;">2,865,200.00</div>
<div class="t" style="left:1447px;top:682px;line-height:30px;height:30px;width:146px;text-align:right;">130,200.00</div>
<div class="t" style="left:1597px;top:682px;line-height:30px;height:30px;width:239px;text-align:right;">3,385,200.00</div>
<div class="a" style="left:64px;top:712px;width:1776px;height:2px;background:#ffffff;"></div>
<div class="a" style="left:158px;top:652px;width:1px;height:62px;background:#e4e4e4;"></div>
<div class="a" style="left:267px;top:652px;width:1px;height:62px;background:#e4e4e4;"></div>
<div class="a" style="left:267px;top:622px;width:1px;height:30px;background:#a6d9fb;"></div>
<div class="a" style="left:417px;top:652px;width:1px;height:62px;background:#e4e4e4;"></div>
<div class="a" style="left:417px;top:622px;width:1px;height:30px;background:#a6d9fb;"></div>
<div class="a" style="left:765px;top:652px;width:1px;height:62px;background:#e4e4e4;"></div>
<div class="a" style="left:765px;top:622px;width:1px;height:30px;background:#a6d9fb;"></div>
<div class="a" style="left:862px;top:652px;width:1px;height:62px;background:#e4e4e4;"></div>
<div class="a" style="left:862px;top:622px;width:1px;height:30px;background:#a6d9fb;"></div>
<div class="a" style="left:1012px;top:652px;width:1px;height:62px;background:#e4e4e4;"></div>
<div class="a" style="left:1012px;top:622px;width:1px;height:30px;background:#a6d9fb;"></div>
<div class="a" style="left:1147px;top:652px;width:1px;height:62px;background:#e4e4e4;"></div>
<div class="a" style="left:1147px;top:622px;width:1px;height:30px;background:#a6d9fb;"></div>
<div class="a" style="left:1297px;top:652px;width:1px;height:62px;background:#e4e4e4;"></div>
<div class="a" style="left:1297px;top:622px;width:1px;height:30px;background:#a6d9fb;"></div>
<div class="a" style="left:1447px;top:652px;width:1px;height:62px;background:#e4e4e4;"></div>
<div class="a" style="left:1447px;top:622px;width:1px;height:30px;background:#a6d9fb;"></div>
<div class="a" style="left:1597px;top:652px;width:1px;height:62px;background:#e4e4e4;"></div>
<div class="a" style="left:1597px;top:622px;width:1px;height:30px;background:#a6d9fb;"></div>
<div class="a" style="left:64px;top:74px;width:1px;height:640px;background:#f6f6f6;"></div>
</body></html>
